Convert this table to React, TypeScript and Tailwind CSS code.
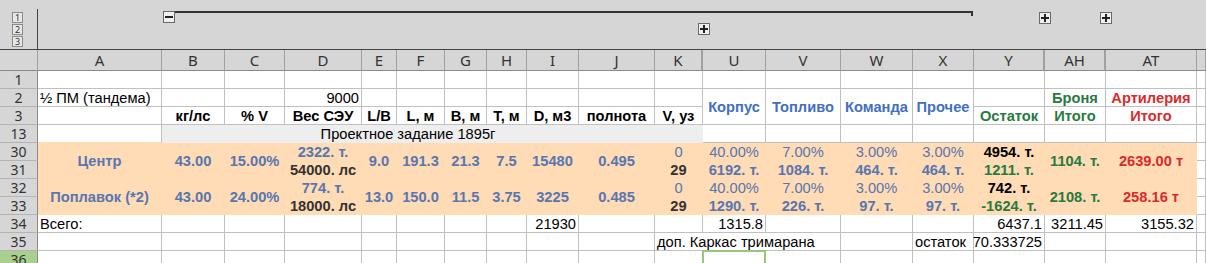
import type { ReactNode } from "react";

const cols =
  "grid grid-cols-[38px_124px_63px_60px_77px_35px_48px_42px_40px_52px_76px_48px_63px_75px_72px_61px_71px_61px_91px_9px]";

type Tone = "w" | "o" | "g" | "wo";
type Align = "l" | "c" | "r";

const tone: Record<Tone, string> = {
  w: "bg-white border-r-[#c0c0c0] border-b-[#c0c0c0]",
  o: "bg-[#ffdbb6] border-r-[#ffdbb6] border-b-[#ffdbb6]",
  g: "bg-[#eeeeee] border-r-[#eeeeee] border-b-[#eeeeee]",
  wo: "bg-white border-r-[#c0c0c0] border-b-[#ffdbb6]",
};

const align: Record<Align, string> = {
  l: "justify-start",
  c: "justify-center",
  r: "justify-end",
};

// blue-grey used for the calculated values
const val = "font-bold text-[#5877b0]";
const valThin = "text-[#5877b0]";
const dark = "font-bold text-[#333333]";
const blue = "font-bold text-[#4170bf]";
const green = "font-bold text-[#287a3e]";
const red = "font-bold text-[#d92b2b]";

function C({
  t = "w",
  a = "l",
  m = false,
  className = "",
  children,
}: {
  t?: Tone;
  a?: Align;
  m?: boolean;
  className?: string;
  children?: ReactNode;
}) {
  return (
    <div
      className={`flex whitespace-nowrap border-r border-b px-[2px] leading-[16px] ${tone[t]} ${align[a]} ${
        m ? "items-center" : "items-end"
      } ${className}`}
    >
      {children}
    </div>
  );
}

function Rh({ n, sel = false }: { n: number; sel?: boolean }) {
  return (
    <div
      className={`flex items-center justify-center border-r border-b border-r-[#8a8a8a] border-b-[#b4b4b4] font-['Noto_Sans',sans-serif] text-[14px] leading-none text-[#333] ${
        sel ? "bg-[#a9d08e]" : "bg-[#d6d6d6]"
      }`}
    >
      {n}
    </div>
  );
}

function empties(n: number, t: Tone = "w") {
  return Array.from({ length: n }, (_, i) => <C key={`e${i}`} t={t} />);
}

function OBtn({ className, plus }: { className: string; plus: boolean }) {
  return (
    <div
      className={`absolute flex h-[12px] w-[12px] items-center justify-center border border-[#6a6a6a] bg-[#f0f0f0] ${className}`}
    >
      <svg width="8" height="8" viewBox="0 0 8 8">
        <rect x="0" y="3" width="8" height="2" fill="#222" />
        {plus && <rect x="3" y="0" width="2" height="8" fill="#222" />}
      </svg>
    </div>
  );
}

const headers: { name: string; cls: string }[] = [
  { name: "", cls: "border-r-[#707070]" },
  { name: "A", cls: "" },
  { name: "B", cls: "" },
  { name: "C", cls: "" },
  { name: "D", cls: "" },
  { name: "E", cls: "" },
  { name: "F", cls: "" },
  { name: "G", cls: "" },
  { name: "H", cls: "" },
  { name: "I", cls: "" },
  { name: "J", cls: "" },
  { name: "K", cls: "border-r-2 border-r-[#7a7a7a]" },
  { name: "U", cls: "bg-[#a9d08e]" },
  { name: "V", cls: "" },
  { name: "W", cls: "" },
  { name: "X", cls: "" },
  { name: "Y", cls: "border-r-2 border-r-[#7a7a7a]" },
  { name: "AH", cls: "border-r-2 border-r-[#7a7a7a]" },
  { name: "AT", cls: "" },
  { name: "", cls: "" },
];

const units = ["кг/лс", "% V", "Вес СЭУ", "L/B", "L, м", "B, м", "T, м", "D, м3", "полнота", "V, уз"];

export default function App() {
  return (
    <div className="h-[263px] w-[1206px] overflow-hidden bg-white font-['Liberation_Sans',Arial,sans-serif] text-[14.67px] text-black">
      {/* outline controls */}
      <div className="relative h-[50px] border-b border-b-[#444] bg-[#d6d6d6]">
        <div className="absolute left-[12px] top-[12px] flex flex-col gap-[1px]">
          {[1, 2, 3].map((n) => (
            <div
              key={n}
              className="flex h-[11px] w-[11px] items-center justify-center border border-[#8a8a8a] bg-[#e8e8e8] font-['Noto_Sans',sans-serif] text-[9px] leading-none text-[#333]"
            >
              {n}
            </div>
          ))}
        </div>
        <div className="absolute left-[37px] top-[9px] h-[41px] w-px bg-[#444]" />
        <OBtn className="left-[163px] top-[11px]" plus={false} />
        <div className="absolute left-[175px] top-[11px] h-[2px] w-[798px] bg-[#333]" />
        <div className="absolute left-[971px] top-[11px] h-[5px] w-[2px] bg-[#333]" />
        <OBtn className="left-[698px] top-[23px]" plus />
        <OBtn className="left-[1039px] top-[12px]" plus />
        <OBtn className="left-[1100px] top-[12px]" plus />
      </div>

      {/* column headers */}
      <div className={`${cols} h-[21px]`}>
        {headers.map((h, i) => (
          <div
            key={i}
            className={`flex items-center justify-center border-r border-b border-r-[#a0a0a0] border-b-[#8a8a8a] bg-[#d6d6d6] font-['Noto_Sans',sans-serif] text-[15px] leading-none text-[#333] ${h.cls}`}
          >
            {h.name}
          </div>
        ))}
      </div>

      <div className={`${cols} auto-rows-[18px]`}>
        {/* row 1 */}
        <Rh n={1} />
        {empties(18)}
        <C />

        {/* row 2 */}
        <Rh n={2} />
        <C>½ ПМ (тандема)</C>
        <C />
        <C />
        <C a="r">9000</C>
        {empties(7)}
        <C a="c" m className={`row-span-2 ${blue}`}>Корпус</C>
        <C a="c" m className={`row-span-2 ${blue}`}>Топливо</C>
        <C a="c" m className={`row-span-2 ${blue}`}>Команда</C>
        <C a="c" m className={`row-span-2 ${blue}`}>Прочее</C>
        <C />
        <C a="c" className={green}>Броня</C>
        <C a="c" className={red}>Артилерия</C>
        <C />

        {/* row 3 */}
        <Rh n={3} />
        <C />
        {units.map((u) => (
          <C key={u} a="c" className="font-bold">
            {u}
          </C>
        ))}
        <C a="c" className={green}>Остаток</C>
        <C a="c" className={green}>Итого</C>
        <C a="c" className={red}>Итого</C>
        <C />

        {/* row 13 */}
        <Rh n={13} />
        <C t="wo" />
        <C t="g" a="c" className="col-span-9">
          Проектное задание 1895г
        </C>
        <C t="g" />
        {empties(7)}
        <C />

        {/* rows 30-31 */}
        <Rh n={30} />
        <C t="o" a="c" m className={`row-span-2 ${val}`}>Центр</C>
        <C t="o" a="c" m className={`row-span-2 ${val}`}>43.00</C>
        <C t="o" a="c" m className={`row-span-2 ${val}`}>15.00%</C>
        <C t="o" a="c" className={val}>2322. т.</C>
        <C t="o" a="c" m className={`row-span-2 ${val}`}>9.0</C>
        <C t="o" a="c" m className={`row-span-2 ${val}`}>191.3</C>
        <C t="o" a="c" m className={`row-span-2 ${val}`}>21.3</C>
        <C t="o" a="c" m className={`row-span-2 ${val}`}>7.5</C>
        <C t="o" a="c" m className={`row-span-2 ${val}`}>15480</C>
        <C t="o" a="c" m className={`row-span-2 ${val}`}>0.495</C>
        <C t="o" a="c" className={valThin}>0</C>
        <C t="o" a="c" className={valThin}>40.00%</C>
        <C t="o" a="c" className={valThin}>7.00%</C>
        <C t="o" a="c" className={valThin}>3.00%</C>
        <C t="o" a="c" className={valThin}>3.00%</C>
        <C t="o" a="c" className="font-bold">4954. т.</C>
        <C t="o" a="c" m className={`row-span-2 ${green}`}>1104. т.</C>
        <C t="o" a="c" m className={`row-span-2 ${red}`}>2639.00 т</C>
        <C />

        <Rh n={31} />
        <C t="o" a="c" className={dark}>54000. лс</C>
        <C t="o" a="c" className={dark}>29</C>
        <C t="o" a="c" className={val}>6192. т.</C>
        <C t="o" a="c" className={val}>1084. т.</C>
        <C t="o" a="c" className={val}>464. т.</C>
        <C t="o" a="c" className={val}>464. т.</C>
        <C t="o" a="c" className={green}>1211. т.</C>
        <C />

        {/* rows 32-33 */}
        <Rh n={32} />
        <C t="o" a="c" m className={`row-span-2 ${val}`}>Поплавок (*2)</C>
        <C t="o" a="c" m className={`row-span-2 ${val}`}>43.00</C>
        <C t="o" a="c" m className={`row-span-2 ${val}`}>24.00%</C>
        <C t="o" a="c" className={val}>774. т.</C>
        <C t="o" a="c" m className={`row-span-2 ${val}`}>13.0</C>
        <C t="o" a="c" m className={`row-span-2 ${val}`}>150.0</C>
        <C t="o" a="c" m className={`row-span-2 ${val}`}>11.5</C>
        <C t="o" a="c" m className={`row-span-2 ${val}`}>3.75</C>
        <C t="o" a="c" m className={`row-span-2 ${val}`}>3225</C>
        <C t="o" a="c" m className={`row-span-2 ${val}`}>0.485</C>
        <C t="o" a="c" className={valThin}>0</C>
        <C t="o" a="c" className={valThin}>40.00%</C>
        <C t="o" a="c" className={valThin}>7.00%</C>
        <C t="o" a="c" className={valThin}>3.00%</C>
        <C t="o" a="c" className={valThin}>3.00%</C>
        <C t="o" a="c" className="font-bold">742. т.</C>
        <C t="o" a="c" m className={`row-span-2 ${green}`}>2108. т.</C>
        <C t="o" a="c" m className={`row-span-2 ${red}`}>258.16 т</C>
        <C />

        <Rh n={33} />
        <C t="o" a="c" className={dark}>18000. лс</C>
        <C t="o" a="c" className={dark}>29</C>
        <C t="o" a="c" className={val}>1290. т.</C>
        <C t="o" a="c" className={val}>226. т.</C>
        <C t="o" a="c" className={val}>97. т.</C>
        <C t="o" a="c" className={val}>97. т.</C>
        <C t="o" a="c" className={green}>-1624. т.</C>
        <C />

        {/* row 34 */}
        <Rh n={34} />
        <C>Всего:</C>
        {empties(7)}
        <C a="r">21930</C>
        <C />
        <C />
        <C a="r">1315.8</C>
        <C />
        <C />
        <C />
        <C a="r">6437.1</C>
        <C a="r">3211.45</C>
        <C a="r">3155.32</C>
        <C />

        {/* row 35 */}
        <Rh n={35} />
        {empties(10)}
        <C className="col-span-3">доп. Каркас тримарана</C>
        <C />
        <C>остаток</C>
        <C a="r">70.333725</C>
        <C />
        <C />
        <C />

        {/* row 36 */}
        <Rh n={36} sel />
        {empties(11)}
        <div className="relative border-r border-b border-r-[#c0c0c0] border-b-[#c0c0c0]">
          <div className="absolute -inset-px border-2 border-[#9cc37f]" />
        </div>
        {empties(6)}
        <C />
      </div>
    </div>
  );
}
